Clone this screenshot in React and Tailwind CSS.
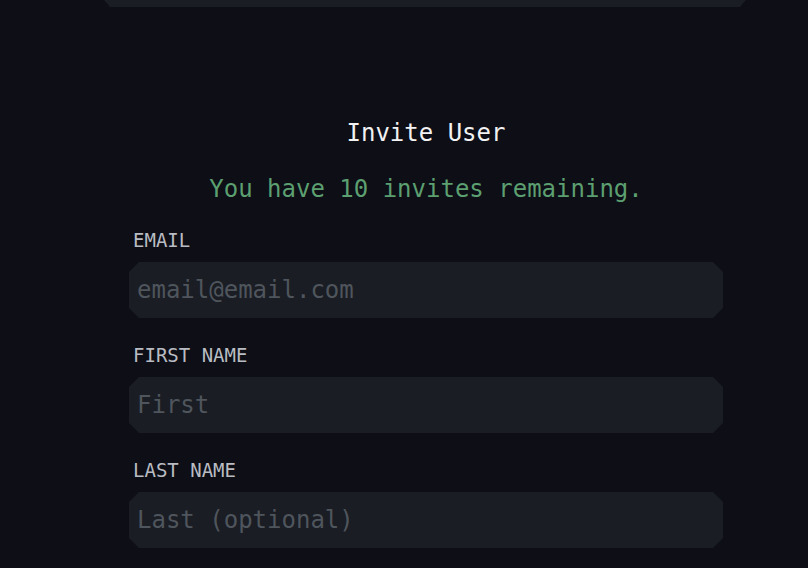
import React from "react";

const chamfer =
  "[clip-path:polygon(10px_0,calc(100%_-_10px)_0,100%_10px,100%_calc(100%_-_10px),calc(100%_-_10px)_100%,10px_100%,0_calc(100%_-_10px),0_10px)]";

const mono = '"DejaVu Sans Mono", "Liberation Mono", monospace';

function Field({ label, placeholder, type = "text" }) {
  return (
    <div className="flex flex-col">
      <label className="text-[19px] leading-[24px] text-[#b9bcc2] pl-[4px]">
        {label}
      </label>
      <input
        type={type}
        placeholder={placeholder}
        className={`mt-[10px] h-[56px] w-full bg-[#1a1d24] px-[8px] text-[24px] text-[#d0d3d8] placeholder:text-[#4f555c] outline-none ${chamfer}`}
        style={{ fontFamily: mono }}
      />
    </div>
  );
}

export default function App() {
  return (
    <div
      className="w-[808px] h-[568px] overflow-hidden bg-[#0d0e16]"
      style={{ fontFamily: mono }}
    >
      <div className="ml-[104px] w-[642px]">
        {/* bottom edge of the card above */}
        <div className="h-[7px] bg-[#1a1d24] [clip-path:polygon(0_0,100%_0,calc(100%_-_6px)_100%,6px_100%)]"></div>

        <div className="pl-[25px] pr-[23px] pt-[110px]">
          <h2 className="text-center text-[24px] leading-[32px] text-[#f2f2f2]">
            Invite User
          </h2>
          <p className="mt-[24px] text-center text-[24px] leading-[32px] text-[#5c9f70]">
            You have 10 invites remaining.
          </p>

          <div className="mt-[23px] flex flex-col gap-[25px]">
            <Field label="EMAIL" placeholder="email@email.com" type="email" />
            <Field label="FIRST NAME" placeholder="First" />
            <Field label="LAST NAME" placeholder="Last (optional)" />
          </div>
        </div>
      </div>
    </div>
  );
}
